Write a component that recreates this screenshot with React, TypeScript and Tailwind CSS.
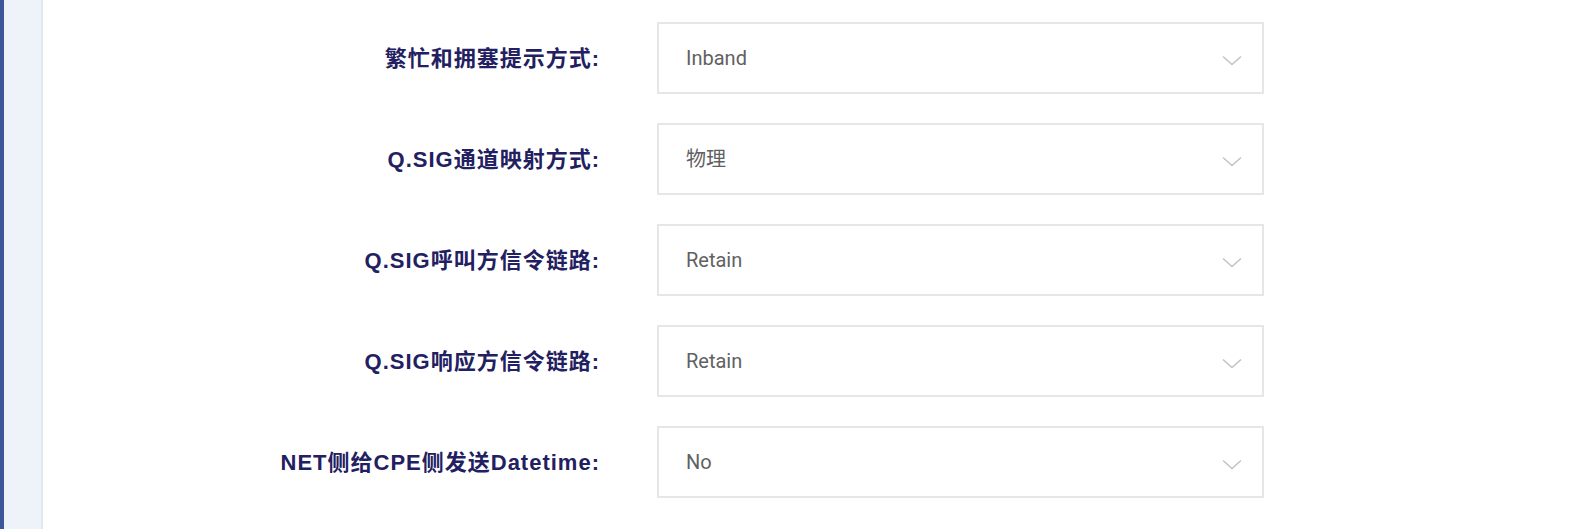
import React from "react";

const rows: { label: string; value: string }[] = [
  { label: "繁忙和拥塞提示方式:", value: "Inband" },
  { label: "Q.SIG通道映射方式:", value: "物理" },
  { label: "Q.SIG呼叫方信令链路:", value: "Retain" },
  { label: "Q.SIG响应方信令链路:", value: "Retain" },
  { label: "NET侧给CPE侧发送Datetime:", value: "No" },
];

function Chevron() {
  return (
    <svg width="20" height="11" viewBox="0 0 20 11" fill="none">
      <path d="M1 1.5 L10 9.5 L19 1.5" stroke="#c4c4c4" strokeWidth="1.6" />
    </svg>
  );
}

export default function App() {
  return (
    <div className="flex h-[529px] w-[1574px] bg-white overflow-hidden">
      <div className="w-[4px] bg-[#3b5699] shrink-0" />
      <div className="w-[37px] bg-[#eef3fa] shrink-0" />
      <div className="w-[2px] bg-[#e1e7f1] shrink-0" />
      <div className="flex flex-col gap-[29px] pt-[22px]">
        {rows.map((r) => (
          <div key={r.label} className="flex items-center h-[72px]">
            <div
              className="w-[557px] text-right text-[22px] font-bold tracking-[1px] text-[#222060]"
              style={{ fontFamily: '"Liberation Sans", "Noto Sans CJK SC", sans-serif' }}
            >
              {r.label}
            </div>
            <div className="ml-[57px] w-[607px] h-[72px] border-2 border-[#e6e6e6] flex items-center justify-between pl-[27px] pr-[20px]">
              <span
                className="text-[20px] text-[#616161]"
                style={{ fontFamily: 'Roboto, "Noto Sans CJK SC", sans-serif' }}
              >
                {r.value}
              </span>
              <span className="mt-[4px]">
                <Chevron />
              </span>
            </div>
          </div>
        ))}
      </div>
    </div>
  );
}
